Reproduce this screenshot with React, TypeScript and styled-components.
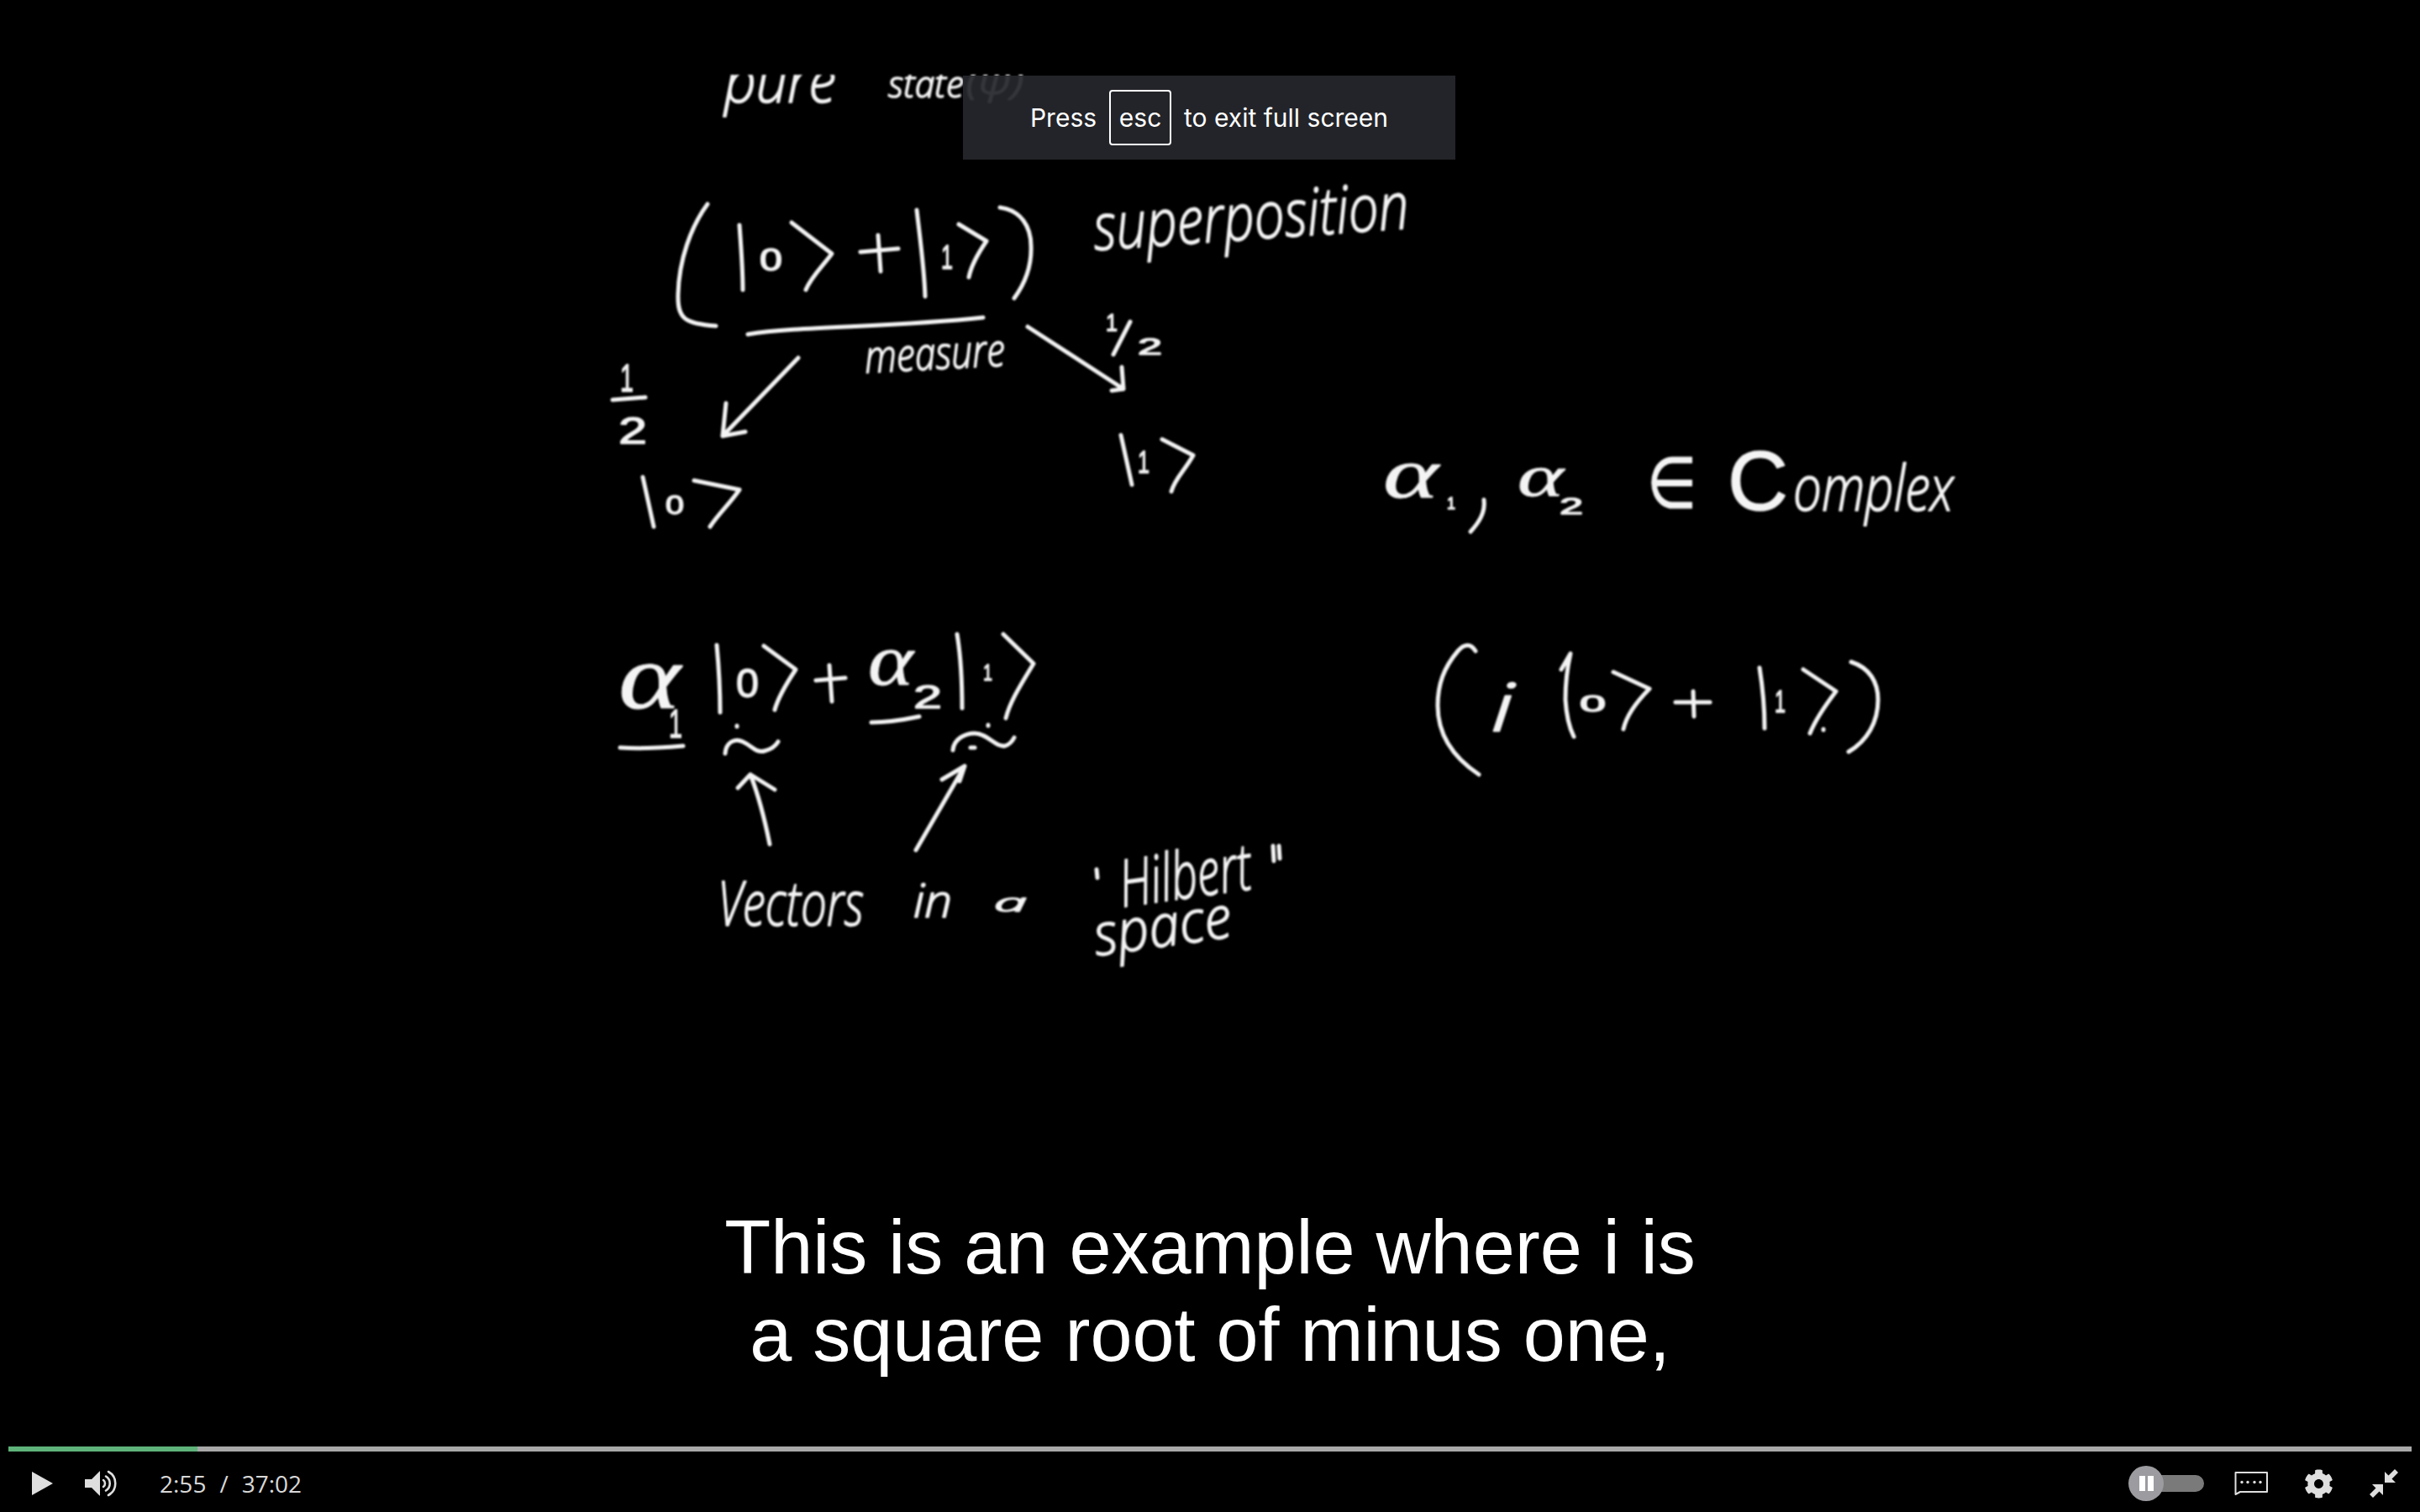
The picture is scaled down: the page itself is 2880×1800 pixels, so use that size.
import styled, { createGlobalStyle } from 'styled-components'
import { FaCog } from 'react-icons/fa'

const Global = createGlobalStyle`
  html, body {
    margin: 0;
    padding: 0;
    background: #000;
  }
`

const Player = styled.div`
  position: relative;
  width: 2880px;
  height: 1800px;
  display: flex;
  flex-direction: column;
  background: #000;
  overflow: hidden;
`
const Stage = styled.div`
  flex: 1;
  display: grid;
  min-height: 0;
`
const Board = styled.svg`
  grid-area: 1 / 1;
  width: 2880px;
  height: 1722px;
  filter: blur(0.8px);
`
const Ink = styled.path`
  fill: none;
  stroke: #f4f4f4;
  stroke-width: 5;
  stroke-linecap: round;
  stroke-linejoin: round;
`
type Face = 'word' | 'digit' | 'greek'

const faces = {
  word: 'font-family: "Open Sans", sans-serif; font-style: italic; font-weight: 300; stroke-width: 1.6;',
  digit: 'font-family: "Liberation Sans", Arial, sans-serif; stroke-width: 1.4;',
  greek: 'font-family: "Liberation Serif", serif; font-style: italic; stroke-width: 0.8;',
}

const Hand = styled.text<{ $face: Face }>`
  fill: #f4f4f4;
  stroke: #f4f4f4;
  stroke-linejoin: round;
  ${({ $face }) => faces[$face]}
`
const Caption = styled.div`
  grid-area: 1 / 1;
  align-self: end;
  padding-bottom: 81px;
  text-align: center;
  font-family: "Liberation Sans", Arial, sans-serif;
  font-size: 90px;
  line-height: 104px;
  color: #fff;
`
const Banner = styled.div`
  position: absolute;
  left: 1146px;
  top: 90px;
  width: 586px;
  height: 100px;
  display: flex;
  align-items: center;
  justify-content: center;
  background: rgba(38, 39, 44, 0.93);
  color: #fff;
  font-family: Inter, "Liberation Sans", sans-serif;
  font-size: 30px;
`
const Key = styled.span`
  box-sizing: border-box;
  width: 74px;
  height: 66px;
  margin: 0 15px;
  display: flex;
  align-items: center;
  justify-content: center;
  border: 2px solid #fff;
  border-radius: 4px;
`
const Progress = styled.div`
  height: 6px;
  margin: 0 10px;
  background: #a8a8a8;
`
const Played = styled.div`
  height: 100%;
  background: #5fb37a;
`
const Controls = styled.div`
  height: 72px;
  padding: 4px 26px 0 38px;
  box-sizing: border-box;
  display: flex;
  align-items: center;
  color: #dedede;
`
const Glyph = styled.svg<{ $gap?: number }>`
  display: block;
  flex: none;
  margin-left: ${({ $gap }) => $gap ?? 0}px;
  fill: currentColor;
`
const Time = styled.div`
  margin-left: 51px;
  display: flex;
  gap: 16px;
  font-family: "Open Sans", sans-serif;
  font-size: 28px;
  font-weight: 400;
  color: #d8d8d8;
`
const Spacer = styled.div`
  flex: 1;
`
const Track = styled.div`
  position: relative;
  width: 69px;
  height: 20px;
  margin-left: 21px;
  border-radius: 0 10px 10px 0;
  background: #7a7a7a;
`
const Knob = styled.div`
  position: absolute;
  left: -21px;
  top: -11px;
  width: 42px;
  height: 42px;
  border-radius: 50%;
  background: #9b9ba0;
  display: flex;
  align-items: center;
  justify-content: center;
  gap: 3px;
`
const PauseBar = styled.span`
  width: 7px;
  height: 18px;
  background: #fff;
`
const CogButton = styled.div`
  margin-left: 43px;
  display: flex;
  font-size: 35px;
  color: #dedede;
`

// blackboard strokes that are not letters: brackets, kets, arrows, underlines
const strokes = [
  // ( |0> + |1> )
  'M842 243C822 270 808 310 807 350C806 380 815 385 852 388',
  'M880 268C882 295 884 320 884 345',
  'M942 265L990 302C978 318 965 330 959 345',
  'M1024 300L1069 296M1045 280L1048 323',
  'M1091 250C1095 285 1100 320 1101 353',
  'M1141 267L1174 287C1165 300 1156 315 1153 330',
  'M1190 247C1215 250 1227 270 1227 293C1228 320 1218 340 1207 355',
  'M890 398C950 388 1060 390 1170 378',
  // measure arrows
  'M950 426L860 519M864 480L860 519L887 514',
  'M1223 389L1337 463M1335 437L1337 463L1323 465',
  'M1345 383L1325 422',
  'M729 476L768 473',
  // |0> and |1> results
  'M765 568L778 627',
  'M826 572L880 583C868 600 855 612 845 627',
  'M1334 518L1347 577',
  'M1383 523L1420 542C1410 560 1398 570 1394 585',
  // a1|0> + a2|1>
  'M738 890C765 892 790 890 813 888',
  'M853 768C856 800 857 825 857 848',
  'M909 769L947 797C935 815 926 830 922 845',
  'M971 810L1006 807M987 792L990 835',
  'M1037 860C1055 860 1075 857 1094 853',
  'M1139 755C1144 785 1145 815 1145 843',
  'M1194 755L1230 790C1215 815 1202 835 1197 855',
  'M863 897C864 884 874 878 884 883C895 888 900 897 910 894C918 892 923 888 926 883',
  'M877 864L877 865',
  'M1134 893C1135 880 1148 873 1160 873C1175 873 1185 890 1196 888C1202 886 1205 882 1207 878',
  'M1176 863L1176 864M1155 890L1160 890',
  'M916 1005C910 975 902 945 893 922M878 938L893 922L922 940',
  'M1090 1012L1148 912M1121 928L1148 912L1142 930',
  'M1305 1035L1306 1045M1515 1007L1516 1025M1522 1007L1523 1022',
  // right hand side
  'M1766 595C1768 610 1760 622 1750 633',
  'M1756 775C1750 765 1742 767 1735 775C1718 795 1711 815 1711 840C1711 875 1730 902 1760 922',
  'M1858 797L1869 778C1864 800 1863 815 1863 833C1864 850 1867 865 1873 877',
  'M1920 800L1963 820C1948 835 1936 850 1932 868',
  'M1994 836L2035 836M2015 823L2016 853',
  'M2094 795C2098 820 2100 845 2100 867',
  'M2146 797L2185 823C2172 840 2160 858 2154 873M2170 868L2170 869',
  'M2203 788C2225 795 2235 812 2235 833C2235 860 2222 882 2200 895',
]

interface Mark {
  text: string
  x: number
  y: number
  size: number
  width: number
  tilt?: number
  face?: Face
}

// handwriting that is real text, fitted to the width it takes on the board
const marks: Mark[] = [
  { text: 'pure', x: 862, y: 122, size: 72, width: 133 },
  { text: 'state', x: 1057, y: 116, size: 44, width: 90 },
  { text: '(ψ)', x: 1150, y: 112, size: 44, width: 68 },
  { text: 'superposition', x: 1303, y: 298, size: 78, width: 376, tilt: -4 },
  { text: '0', x: 904, y: 322, size: 36, width: 27, face: 'digit' },
  { text: '1', x: 1120, y: 320, size: 40, width: 14, face: 'digit' },
  { text: 'measure', x: 1030, y: 444, size: 54, width: 167, tilt: -3 },
  { text: '1', x: 1316, y: 394, size: 30, width: 14, face: 'digit' },
  { text: '2', x: 1354, y: 422, size: 28, width: 29, face: 'digit' },
  { text: '1', x: 738, y: 466, size: 46, width: 16, face: 'digit' },
  { text: '2', x: 736, y: 528, size: 44, width: 34, face: 'digit' },
  { text: '0', x: 792, y: 612, size: 32, width: 22, face: 'digit' },
  { text: '1', x: 1354, y: 563, size: 36, width: 14, face: 'digit' },
  { text: 'α', x: 736, y: 843, size: 110, width: 74, face: 'greek' },
  { text: '1', x: 796, y: 878, size: 48, width: 16, face: 'digit' },
  { text: '0', x: 876, y: 830, size: 48, width: 27, face: 'digit' },
  { text: 'α', x: 1033, y: 815, size: 86, width: 54, face: 'greek' },
  { text: '2', x: 1087, y: 843, size: 38, width: 34, face: 'digit' },
  { text: '1', x: 1170, y: 810, size: 28, width: 11, face: 'digit' },
  { text: 'Vectors', x: 854, y: 1102, size: 74, width: 174 },
  { text: 'in', x: 1087, y: 1092, size: 56, width: 46 },
  { text: 'a', x: 1183, y: 1085, size: 30, width: 39 },
  { text: 'Hilbert', x: 1336, y: 1080, size: 78, width: 158, tilt: -8 },
  { text: 'space', x: 1305, y: 1138, size: 70, width: 165, tilt: -8 },
  { text: 'α', x: 1646, y: 592, size: 84, width: 66, face: 'greek' },
  { text: '1', x: 1722, y: 606, size: 20, width: 10, face: 'digit' },
  { text: 'α', x: 1806, y: 590, size: 70, width: 55, face: 'greek' },
  { text: '2', x: 1856, y: 612, size: 28, width: 28, face: 'digit' },
  { text: '∈', x: 1960, y: 604, size: 84, width: 59, face: 'digit' },
  { text: 'C', x: 2056, y: 607, size: 100, width: 72, face: 'digit' },
  { text: 'omplex', x: 2134, y: 608, size: 76, width: 191 },
  { text: 'i', x: 1774, y: 870, size: 80, width: 28 },
  { text: '0', x: 1880, y: 847, size: 28, width: 31, face: 'digit' },
  { text: '1', x: 2112, y: 848, size: 36, width: 13, face: 'digit' },
]

const progress = (175 / 2222) * 100

export default function App() {
  return (
    <Player>
      <Global />
      <Stage>
        <Board viewBox="0 0 2880 1722">
          <defs>
            <clipPath id="frame">
              <rect x="0" y="89" width="2880" height="1633" />
            </clipPath>
          </defs>
          <g clipPath="url(#frame)">
            {strokes.map((d) => (
              <Ink key={d} d={d} />
            ))}
            {marks.map((m) => (
              <Hand
                key={`${m.text}-${m.x}`}
                $face={m.face ?? 'word'}
                x={m.x}
                y={m.y}
                fontSize={m.size}
                textLength={m.width}
                lengthAdjust="spacingAndGlyphs"
                transform={m.tilt ? `rotate(${m.tilt} ${m.x} ${m.y})` : undefined}
              >
                {m.text}
              </Hand>
            ))}
          </g>
        </Board>
        <Caption>
          This is an example where i is
          <br />
          a square root of minus one,
        </Caption>
      </Stage>
      <Banner>
        <span>Press</span>
        <Key>esc</Key>
        <span>to exit full screen</span>
      </Banner>
      <Progress>
        <Played style={{ width: `${progress}%` }} />
      </Progress>
      <Controls>
        <Glyph width="25" height="28" viewBox="0 0 25 28">
          <path d="M0 0L25 14L0 28Z" />
        </Glyph>
        <Glyph $gap={38} width="38" height="32" viewBox="0 0 38 32">
          <path d="M0 11H8L17 2C18 1 18 1 18 3V29C18 31 18 31 17 30L8 21H0Z" />
          <g fill="none" stroke="currentColor" strokeWidth="2.6" strokeLinecap="round">
            <path d="M22 12A5 5 0 0 1 22 20" />
            <path d="M25 7.500A10 10 0 0 1 25 24.500" />
            <path d="M28 2A16 16 0 0 1 28 30" />
          </g>
        </Glyph>
        <Time>
          <span>2:55</span>
          <span>/</span>
          <span>37:02</span>
        </Time>
        <Spacer />
        <Track>
          <Knob>
            <PauseBar />
            <PauseBar />
          </Knob>
        </Track>
        <Glyph $gap={36} width="40" height="28" viewBox="0 0 40 28">
          <path
            d="M1.500 1H39V24H7L1.500 27Z"
            fill="none"
            stroke="currentColor"
            strokeWidth="2"
            strokeLinejoin="round"
          />
          <circle cx="9" cy="12.500" r="1.700" />
          <circle cx="16" cy="12.500" r="1.700" />
          <circle cx="24" cy="12.500" r="1.700" />
          <circle cx="31" cy="12.500" r="1.700" />
        </Glyph>
        <CogButton>
          <FaCog />
        </CogButton>
        <Glyph $gap={43} width="34" height="34" viewBox="0 0 34 34">
          <path d="M18 16V3L22.500 7.500L30 0L34 4L26.500 11.500L31 16Z" />
          <path d="M16 18V31L11.500 26.500L4 34L0 30L7.500 22.500L3 18Z" />
        </Glyph>
      </Controls>
    </Player>
  )
}
